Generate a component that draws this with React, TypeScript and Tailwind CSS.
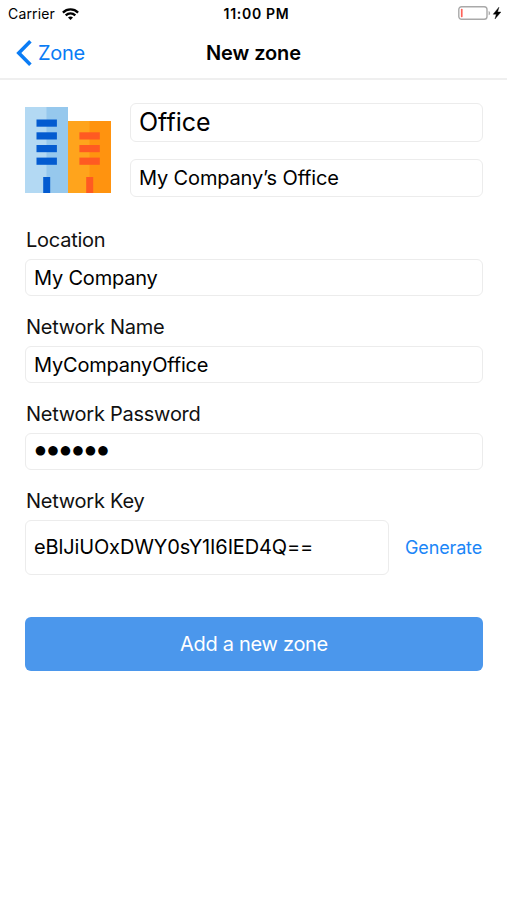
import type { ReactNode } from "react";
import clsx from "clsx";

function StatusBar() {
  return (
    <div className="grid grid-cols-3 items-center h-7 px-2 text-black">
      <div className="flex items-center gap-[7px]">
        <span className="text-[14px] leading-none tracking-[0.15px]">Carrier</span>
        <svg className="w-[17px] h-3" viewBox="0 0 17 12" fill="none" stroke="#000" strokeWidth="2.3">
          <path d="M0.9 4.6C5.2 0.4 11.8 0.4 16.1 4.6" />
          <path d="M3.7 7.4C6.5 4.8 10.5 4.8 13.3 7.4" />
          <path d="M8.5 12L6 9.4C7.4 8.1 9.6 8.1 11 9.4Z" fill="#000" stroke="none" />
        </svg>
      </div>
      <span className="text-center text-[14px] font-semibold leading-none tracking-[0.7px] pl-[6px]">11:00 PM</span>
      <div className="flex items-center justify-end -mr-1">
        <svg className="w-[45px] h-4 -mt-[2px]" viewBox="0 0 45 16">
          <rect x="0.8" y="1.7" width="28.2" height="12.6" rx="2.8" fill="#fff" stroke="#a9a9a9" strokeWidth="1.4" />
          <rect x="2.9" y="3.8" width="1.7" height="8.4" rx="0.6" fill="#ff6259" />
          <path d="M30.6 5.9C32.6 6.6 32.6 9.6 30.6 10.3Z" fill="#a9a9a9" />
          <path d="M40.9 2.2L35.2 9.2H38.3L37 14L42.9 7H39.6Z" fill="#000" stroke="#000" strokeWidth="0.4" />
        </svg>
      </div>
    </div>
  );
}

function BuildingsIcon() {
  return (
    <svg className="w-[86px] h-[86px] mt-[4px] shrink-0" viewBox="0 0 86 86">
      <rect width="43" height="86" fill="#b3d9f3" />
      <rect x="21.5" width="21.5" height="86" fill="#96c8ed" />
      <rect x="43" y="14" width="43" height="72" fill="#ffa41c" />
      <rect x="64.5" y="14" width="21.5" height="72" fill="#ff930f" />
      <g fill="#035bd0">
        <rect x="11.5" y="12.5" width="20.4" height="7.2" />
        <rect x="11.5" y="25.3" width="20.4" height="7.2" />
        <rect x="11.5" y="38" width="20.4" height="7.2" />
        <rect x="11.5" y="50.6" width="20.4" height="7.2" />
        <rect x="18.2" y="70" width="7" height="16" />
      </g>
      <g fill="#ff5a22">
        <rect x="54.4" y="25.3" width="20.4" height="7.2" />
        <rect x="54.4" y="38" width="20.4" height="7.2" />
        <rect x="54.4" y="50.6" width="20.4" height="7.2" />
        <rect x="61.2" y="70" width="7" height="16" />
      </g>
    </svg>
  );
}

function Field({ className, children }: { className?: string; children: ReactNode }) {
  return (
    <div
      className={clsx(
        "flex items-center rounded-md border border-[#ececec] bg-white px-2 text-black whitespace-nowrap",
        className
      )}
    >
      {children}
    </div>
  );
}

function Label({ children }: { children: ReactNode }) {
  return (
    <div className="h-[26px] pl-px text-[20px] leading-[26px] tracking-[-0.25px] text-[#111]">{children}</div>
  );
}

export default function App() {
  return (
    <div className="min-h-[900px] w-[507px] bg-white font-[Inter,sans-serif]">
      <StatusBar />

      {/* Navigation bar */}
      <header className="grid grid-cols-3 items-center h-[52px] px-4 border-b-2 border-[#efefef]">
        <button className="flex items-center gap-[6px] text-[#0a7cf5]">
          <svg className="w-4 h-[26px]" viewBox="0 0 16 26" fill="none" stroke="currentColor" strokeWidth="3.6">
            <path d="M14.4 1.3L2.8 13L14.4 24.7" />
          </svg>
          <span className="text-[20px] leading-6 tracking-[-0.3px]">Zone</span>
        </button>
        <h1 className="text-center text-[20px] font-semibold leading-6 tracking-[-0.1px] text-black">New zone</h1>
      </header>

      <main className="pl-[25px] pr-[24px] pt-[23px]">
        <div className="flex gap-[19px]">
          <BuildingsIcon />
          <div className="flex-1">
            <Field className="h-[39px] text-[25px]">Office</Field>
            <Field className="mt-[17px] h-[38px] text-[20px] tracking-[-0.15px]">My Company’s Office</Field>
          </div>
        </div>

        <div className="mt-[30px]">
          <Label>Location</Label>
          <Field className="mt-[6px] h-[37px] text-[20px] tracking-[-0.2px]">My Company</Field>
        </div>

        <div className="mt-[18px]">
          <Label>Network Name</Label>
          <Field className="mt-[6px] h-[37px] text-[20px] tracking-[-0.2px]">MyCompanyOffice</Field>
        </div>

        <div className="mt-[18px]">
          <Label>Network Password</Label>
          <Field className="mt-[6px] h-[37px]">
            <span className="pl-px pb-[3px] font-['DejaVu_Sans'] text-[12.5px] tracking-[1.6px]">●●●●●●</span>
          </Field>
        </div>

        <div className="mt-[18px]">
          <Label>Network Key</Label>
          <div className="mt-[6px] flex items-center justify-between">
            <Field className="h-[55px] w-[364px] pb-[2px] text-[20px] tracking-[-0.13px]">
              eBlJiUOxDWY0sY1I6IED4Q==
            </Field>
            <button className="pr-px text-[18px] tracking-[-0.15px] text-[#1b86f7]">Generate</button>
          </div>
        </div>

        <button className="mt-[42px] h-[54px] w-full rounded-md bg-[#4b97ec] text-[20px] tracking-[-0.3px] text-white">
          Add a new zone
        </button>
      </main>
    </div>
  );
}
